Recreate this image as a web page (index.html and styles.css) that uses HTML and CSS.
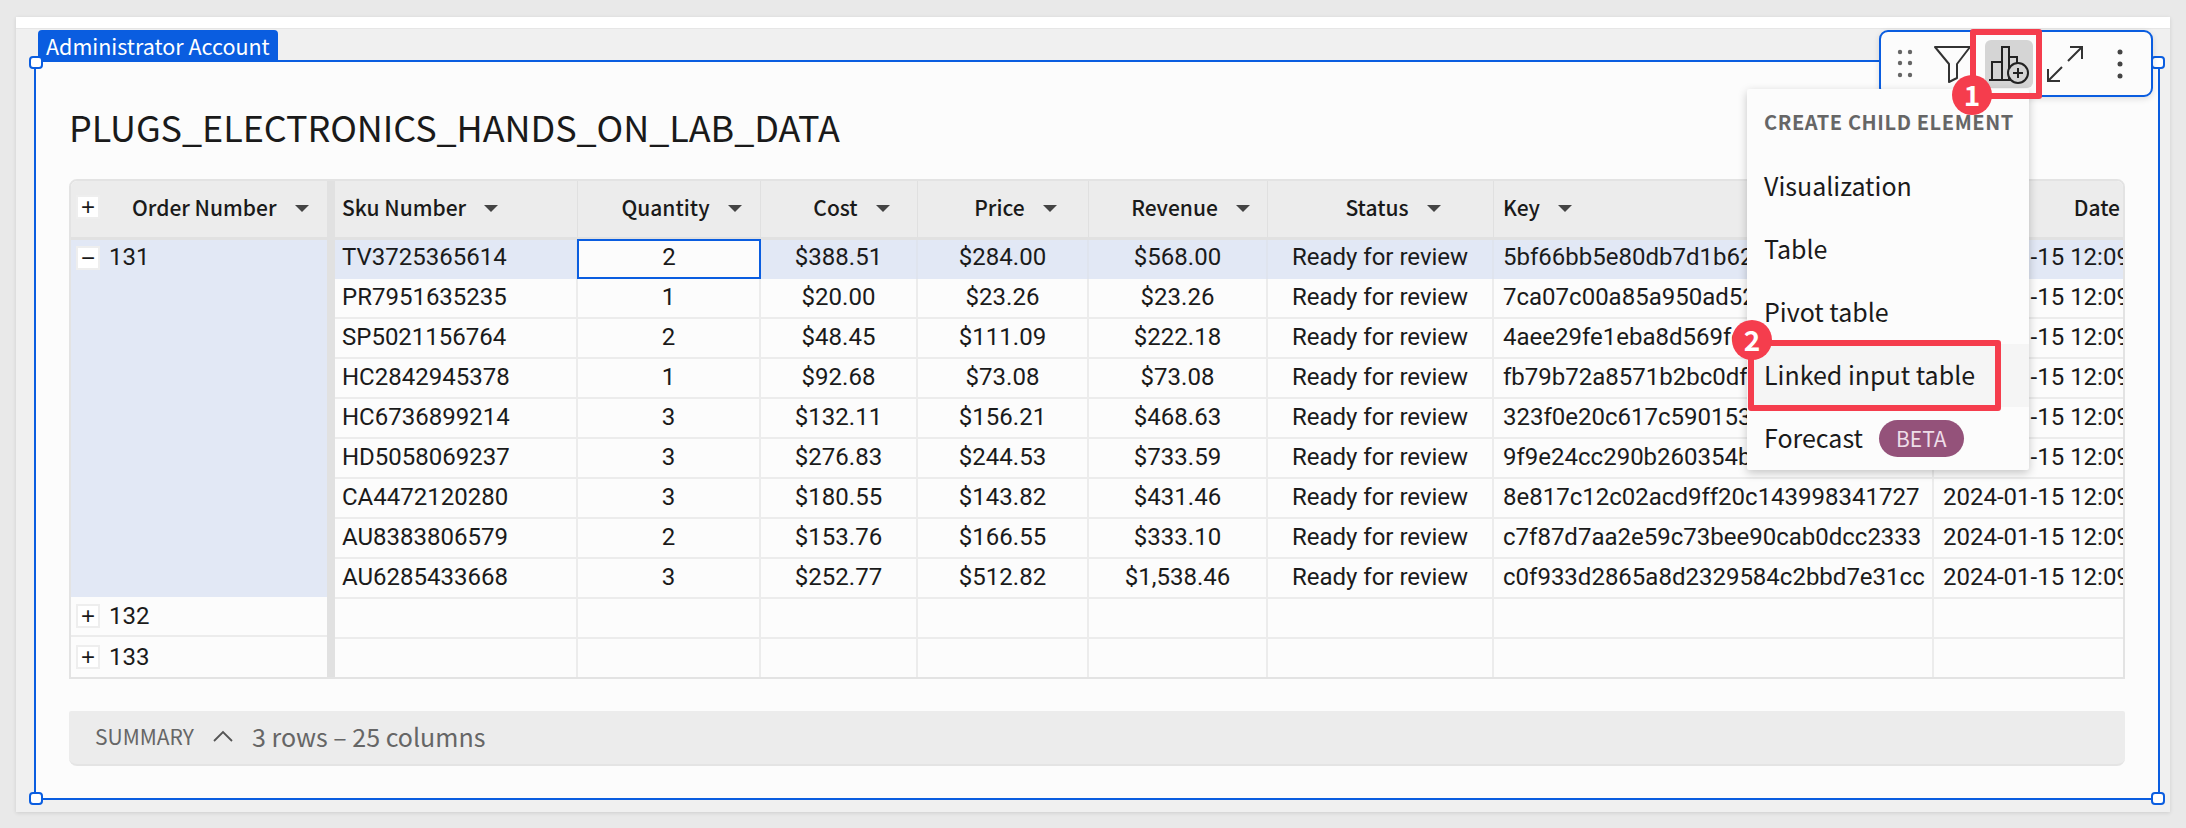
FILE: index.html
```html
<!DOCTYPE html>
<html>
<head>
  <title>Plugs Electronics</title>
  <link rel="stylesheet" href="styles.css">
</head>
<body>
  <div class="page">
    <div class="card">
      <div class="card-top"></div>
      <div class="element">
        <h1 class="title">PLUGS_ELECTRONICS_HANDS_ON_LAB_DATA</h1>

        <div class="table">
          <div class="freeze">
            <div class="head head-order">
              <span class="toggle">+</span>
              <span class="head-label">Order Number</span><span class="caret"></span>
            </div>
            <div class="group group-open"><span class="toggle">&minus;</span>131</div>
            <div class="group"><span class="toggle">+</span>132</div>
            <div class="group group-last"><span class="toggle">+</span>133</div>
          </div>
          <div class="sep"></div>
          <div class="data">
            <div class="row row-head">
              <div class="head"><span class="head-label">Sku Number</span><span class="caret"></span></div>
              <div class="head center"><span class="head-label">Quantity</span><span class="caret"></span></div>
              <div class="head center"><span class="head-label">Cost</span><span class="caret"></span></div>
              <div class="head center"><span class="head-label">Price</span><span class="caret"></span></div>
              <div class="head center"><span class="head-label">Revenue</span><span class="caret"></span></div>
              <div class="head center"><span class="head-label">Status</span><span class="caret"></span></div>
              <div class="head"><span class="head-label">Key</span><span class="caret"></span></div>
              <div class="head date-head"><span class="head-label">Date</span><span class="caret"></span></div>
            </div>
            <div class="row row-active">
              <div class="cell">TV3725365614</div><div class="cell center cell-selected">2</div><div class="cell center">$388.51</div><div class="cell center">$284.00</div><div class="cell center">$568.00</div><div class="cell center">Ready for review</div><div class="cell">5bf66bb5e80db7d1b62c41d07a9e3f16</div><div class="cell">2024-01-15 12:09:44</div>
            </div>
            <div class="row">
              <div class="cell">PR7951635235</div><div class="cell center">1</div><div class="cell center">$20.00</div><div class="cell center">$23.26</div><div class="cell center">$23.26</div><div class="cell center">Ready for review</div><div class="cell">7ca07c00a85a950ad52e81f3b6d90c47</div><div class="cell">2024-01-15 12:09:44</div>
            </div>
            <div class="row">
              <div class="cell">SP5021156764</div><div class="cell center">2</div><div class="cell center">$48.45</div><div class="cell center">$111.09</div><div class="cell center">$222.18</div><div class="cell center">Ready for review</div><div class="cell">4aee29fe1eba8d569fc07d3a21b8e654</div><div class="cell">2024-01-15 12:09:44</div>
            </div>
            <div class="row">
              <div class="cell">HC2842945378</div><div class="cell center">1</div><div class="cell center">$92.68</div><div class="cell center">$73.08</div><div class="cell center">$73.08</div><div class="cell center">Ready for review</div><div class="cell">fb79b72a8571b2bc0df94e6a13c7d285</div><div class="cell">2024-01-15 12:09:44</div>
            </div>
            <div class="row">
              <div class="cell">HC6736899214</div><div class="cell center">3</div><div class="cell center">$132.11</div><div class="cell center">$156.21</div><div class="cell center">$468.63</div><div class="cell center">Ready for review</div><div class="cell">323f0e20c617c5901537ad84be2f6c19</div><div class="cell">2024-01-15 12:09:44</div>
            </div>
            <div class="row">
              <div class="cell">HD5058069237</div><div class="cell center">3</div><div class="cell center">$276.83</div><div class="cell center">$244.53</div><div class="cell center">$733.59</div><div class="cell center">Ready for review</div><div class="cell">9f9e24cc290b260354b8d17ea6c3f092</div><div class="cell">2024-01-15 12:09:44</div>
            </div>
            <div class="row">
              <div class="cell">CA4472120280</div><div class="cell center">3</div><div class="cell center">$180.55</div><div class="cell center">$143.82</div><div class="cell center">$431.46</div><div class="cell center">Ready for review</div><div class="cell">8e817c12c02acd9ff20c143998341727</div><div class="cell">2024-01-15 12:09:44</div>
            </div>
            <div class="row">
              <div class="cell">AU8383806579</div><div class="cell center">2</div><div class="cell center">$153.76</div><div class="cell center">$166.55</div><div class="cell center">$333.10</div><div class="cell center">Ready for review</div><div class="cell">c7f87d7aa2e59c73bee90cab0dcc2333</div><div class="cell">2024-01-15 12:09:44</div>
            </div>
            <div class="row">
              <div class="cell">AU6285433668</div><div class="cell center">3</div><div class="cell center">$252.77</div><div class="cell center">$512.82</div><div class="cell center">$1,538.46</div><div class="cell center">Ready for review</div><div class="cell">c0f933d2865a8d2329584c2bbd7e31cc</div><div class="cell">2024-01-15 12:09:44</div>
            </div>
            <div class="row">
              <div class="cell"></div><div class="cell"></div><div class="cell"></div><div class="cell"></div><div class="cell"></div><div class="cell"></div><div class="cell"></div><div class="cell"></div>
            </div>
            <div class="row row-last">
              <div class="cell"></div><div class="cell"></div><div class="cell"></div><div class="cell"></div><div class="cell"></div><div class="cell"></div><div class="cell"></div><div class="cell"></div>
            </div>
          </div>
        </div>

        <div class="summary">
          <span class="summary-label">SUMMARY</span>
          <svg class="summary-chevron" width="20" height="12" viewBox="0 0 20 12"><path d="M1 11 L10 2 L19 11" fill="none" stroke="#555" stroke-width="1.8"/></svg>
          <span class="summary-count">3 rows – 25 columns</span>
        </div>
      </div>
    </div>
  </div>

  <!-- selection chrome, sits over the element -->
  <div class="tag">Administrator Account</div>
  <span class="handle handle-tl"></span>
  <span class="handle handle-tr"></span>
  <span class="handle handle-bl"></span>
  <span class="handle handle-br"></span>

  <div class="toolbar">
    <svg class="tool-drag" width="16" height="30" viewBox="0 0 16 30" fill="#666">
      <circle cx="3" cy="3" r="2.2"/><circle cx="13" cy="3" r="2.2"/>
      <circle cx="3" cy="14" r="2.2"/><circle cx="13" cy="14" r="2.2"/>
      <circle cx="3" cy="26" r="2.2"/><circle cx="13" cy="26" r="2.2"/>
    </svg>
    <svg class="tool-filter" width="38" height="38" viewBox="0 0 38 38">
      <path d="M1 2 H36 L23 19 V33 L15 37 V19 Z" fill="none" stroke="#333" stroke-width="2" stroke-linejoin="round"/>
    </svg>
    <div class="tool-active">
      <svg width="48" height="48" viewBox="0 0 48 48">
        <path d="M4 40 H33 M7 40 V22 H17 V40 M17 40 V7 H24 V40 M24 40 V17 H32 V30" fill="none" stroke="#222" stroke-width="2"/>
        <circle cx="33" cy="33" r="10" fill="#d5d5d5" stroke="#222" stroke-width="2"/>
        <path d="M33 28 V38 M28 33 H38" stroke="#222" stroke-width="2"/>
      </svg>
    </div>
    <svg class="tool-expand" width="38" height="38" viewBox="0 0 38 38">
      <path d="M22 16 L36 2 M24 2 H36 V14 M16 22 L2 36 M2 24 V36 H14" fill="none" stroke="#333" stroke-width="2"/>
    </svg>
    <svg class="tool-more" width="8" height="32" viewBox="0 0 8 32" fill="#444">
      <circle cx="4" cy="4" r="2.5"/><circle cx="4" cy="16" r="2.5"/><circle cx="4" cy="28" r="2.5"/>
    </svg>
  </div>

  <div class="menu">
    <div class="menu-title">CREATE CHILD ELEMENT</div>
    <div class="menu-item">Visualization</div>
    <div class="menu-item">Table</div>
    <div class="menu-item">Pivot table</div>
    <div class="menu-item menu-item-hover">Linked input table</div>
    <div class="menu-item">Forecast <span class="beta">BETA</span></div>
  </div>

  <!-- red annotations -->
  <div class="callout-box callout-box-1"></div>
  <div class="callout-num callout-num-1">1</div>
  <div class="callout-box callout-box-2"></div>
  <div class="callout-num callout-num-2">2</div>
</body>
</html>
```

FILE: styles.css
```css
body {
  margin: 0;
  width: 2186px;
  height: 828px;
  position: relative;
  overflow: hidden;
  background-color: #e9e9e9;
  font-family: "Noto Sans CJK JP", "Noto Sans", sans-serif;
  color: #1a1a1a;
}

.page {
  padding: 17px 16px 16px 16px;
}

.card {
  height: 795px;
  background-color: #f0f0f0;
  box-shadow: 0 1px 4px rgba(0, 0, 0, 0.12);
}

.card-top {
  height: 11px;
  background-color: #fff;
  border-bottom: 1px solid #e6e6e6;
}

.element {
  box-sizing: border-box;
  margin: 31px 10px 0 18px;
  height: 740px;
  padding: 0 33px 0 33px;
  background-color: #fcfcfc;
  border: 2px solid #0a5de0;
}

.title {
  margin: 0;
  padding-top: 37px;
  height: 117px;
  box-sizing: border-box;
  font-size: 36px;
  line-height: 54px;
  font-weight: 400;
  letter-spacing: -0.08px;
  color: #1a1a1a;
}

/* table */
.table {
  display: flex;
  box-sizing: border-box;
  height: 500px;
  border: 2px solid #e3e3e3;
  border-radius: 8px 8px 0 0;
  font-family: Roboto, sans-serif;
  font-size: 24px;
  overflow: hidden;
}

.freeze {
  width: 256px;
  flex: none;
  display: flex;
  flex-direction: column;
}

.sep {
  width: 8px;
  flex: none;
  background-color: #e1e1e1;
}

.data {
  flex: 1;
  min-width: 0;
}

.row {
  display: grid;
  grid-template-columns: 243px 183px 157px 171px 179px 226px 440px 189px;
  height: 40px;
  box-sizing: border-box;
  border-bottom: 2px solid #ececec;
}

.row-head {
  height: 59px;
  border-bottom: 3px solid #e1e1e1;
  background-color: #ececec;
}

.row-active {
  background-color: #e2e8f5;
  height: 39px;
  border-bottom: none;
}

.row-last {
  border-bottom: none;
}

.head {
  display: flex;
  align-items: center;
  padding: 0 9px 5px 9px;
  border-right: 1px solid #e0e0e0;
  font-family: "Noto Sans CJK JP", "Noto Sans", sans-serif;
  font-size: 21px;
  font-weight: 500;
  white-space: nowrap;
  overflow: hidden;
}

.head.center {
  justify-content: center;
  padding-left: 34px;
}

.row-head .head:first-child {
  padding-left: 7px;
}

.date-head {
  border-right: none;
  justify-content: flex-end;
  padding-right: 3px;
}

.date-head .caret {
  display: none;
}

.caret {
  flex: none;
  margin-left: 18px;
  margin-top: 4px;
  border-left: 7px solid transparent;
  border-right: 7px solid transparent;
  border-top: 7px solid #444;
}

.cell {
  box-sizing: border-box;
  padding: 0 9px;
  line-height: 37px;
  border-right: 2px solid #ececec;
  white-space: nowrap;
  overflow: hidden;
}

.cell:first-child {
  padding-left: 7px;
}

.cell:last-child {
  border-right: none;
}

.center {
  text-align: center;
}

.row-active .cell {
  line-height: 35px;
  border-right-color: #dfe4ee;
}

.row-active .cell-selected {
  height: 40px;
  margin: -1px 0 0 -1px;
  background-color: #fcfcfc;
  border: 2px solid #0a5de0;
  line-height: 33px;
}

.head-order {
  height: 59px;
  flex: none;
  box-sizing: border-box;
  padding: 0 0 5px 5px;
  border-right: none;
  border-bottom: 3px solid #e1e1e1;
  background-color: #ececec;
}

.head-order .head-label {
  margin-left: 23px;
}

.group {
  display: flex;
  align-items: center;
  height: 40px;
  box-sizing: border-box;
  padding-left: 5px;
  border-bottom: 2px solid #ececec;
}

.group-open {
  height: 359px;
  align-items: flex-start;
  padding-top: 6px;
  border-bottom: none;
  background-color: #e2e8f5;
  line-height: 22px;
}

.group-last {
  border-bottom: none;
}

.toggle {
  flex: none;
  box-sizing: border-box;
  width: 24px;
  height: 24px;
  margin-right: 9px;
  background-color: #fff;
  border: 2px solid #eee;
  font-family: "Liberation Sans", sans-serif;
  font-size: 24px;
  font-weight: 400;
  line-height: 19px;
  text-align: center;
}

/* summary */
.summary {
  display: flex;
  align-items: center;
  box-sizing: border-box;
  height: 55px;
  margin-top: 32px;
  padding: 0 0 3px 26px;
  background-color: #ececec;
  border-bottom: 2px solid #e4e4e4;
  border-radius: 2px 2px 8px 8px;
  color: #666;
}

.summary-label {
  font-size: 21px;
}

.summary-chevron {
  margin: 0 0 0 19px;
}

.summary-count {
  margin-left: 19px;
  font-size: 25px;
}

/* selection chrome */
.tag {
  position: absolute;
  left: 38px;
  top: 30px;
  width: 240px;
  height: 31px;
  box-sizing: border-box;
  padding-left: 8px;
  background-color: #0a5de0;
  border-radius: 4px 4px 0 0;
  color: #fff;
  font-size: 21.5px;
  line-height: 31px;
}

.handle {
  position: absolute;
  box-sizing: border-box;
  width: 14px;
  height: 13px;
  background-color: #fff;
  border: 2px solid #0a5de0;
  border-radius: 4px;
}

.handle-tl { left: 29px; top: 56px; }
.handle-tr { left: 2151px; top: 56px; }
.handle-bl { left: 29px; top: 792px; }
.handle-br { left: 2151px; top: 792px; }

.toolbar {
  position: absolute;
  left: 1879px;
  top: 30px;
  width: 274px;
  height: 67px;
  box-sizing: border-box;
  display: flex;
  align-items: center;
  padding-left: 14px;
  background-color: #fcfcfc;
  border: 2px solid #0a5de0;
  border-radius: 9px;
  box-shadow: 0 2px 6px rgba(0, 0, 0, 0.12);
}

.tool-drag {
  margin-left: 2px;
}

.tool-filter {
  margin-left: 21px;
}

.tool-active {
  width: 48px;
  height: 48px;
  margin-left: 13px;
  background-color: #d5d5d5;
  border-radius: 6px;
}

.tool-expand {
  margin-left: 13px;
}

.tool-more {
  margin-left: 32px;
}

/* menu */
.menu {
  position: absolute;
  left: 1747px;
  top: 89px;
  width: 282px;
  height: 381px;
  background-color: #fcfcfc;
  box-shadow: 0 3px 10px rgba(0, 0, 0, 0.22);
  border-radius: 2px;
}

.menu-title {
  height: 66px;
  padding-left: 17px;
  color: #666;
  font-size: 20px;
  font-weight: 700;
  line-height: 66px;
  letter-spacing: 0.6px;
  white-space: nowrap;
}

.menu-item {
  display: flex;
  align-items: center;
  box-sizing: border-box;
  height: 63px;
  padding: 0 0 4px 17px;
  font-size: 25px;
}

.menu-item-hover {
  background-color: #f5f5f5;
}

.beta {
  margin: 4px 0 0 16px;
  padding: 0 17px;
  height: 37px;
  line-height: 37px;
  background-color: #94527a;
  border-radius: 19px;
  color: #eedde8;
  font-size: 21px;
}

/* annotations */
.callout-box {
  position: absolute;
  box-sizing: border-box;
  border: 6px solid #f53d4d;
  border-radius: 3px;
}

.callout-box-1 {
  left: 1970px;
  top: 29px;
  width: 72px;
  height: 70px;
}

.callout-box-2 {
  left: 1748px;
  top: 340px;
  width: 253px;
  height: 71px;
}

.callout-num {
  position: absolute;
  width: 40px;
  height: 40px;
  background-color: #f53d4d;
  border-radius: 50%;
  color: #fff;
  font-size: 28px;
  font-weight: 700;
  line-height: 38px;
  text-align: center;
}

.callout-num-1 {
  left: 1952px;
  top: 75px;
}

.callout-num-2 {
  left: 1732px;
  top: 320px;
}
```
